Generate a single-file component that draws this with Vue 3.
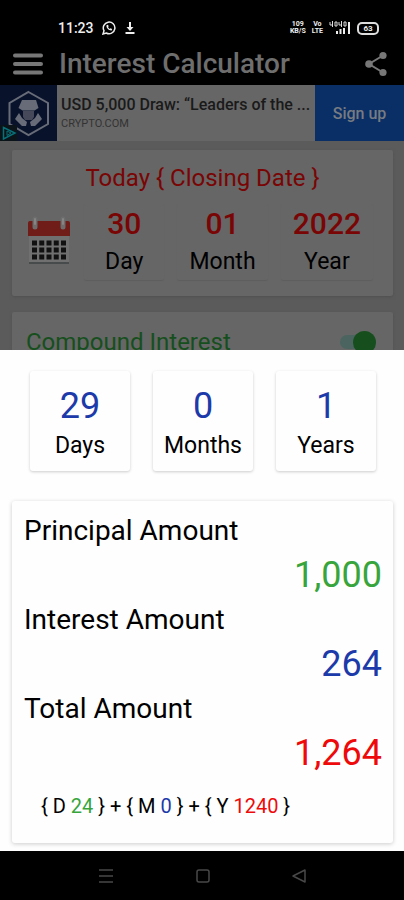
<template>
  <div class="phone">
    <header class="top">
      <div class="status">
        <span class="clock">11:23</span>
        <svg class="whatsapp" viewBox="0 0 14 14" width="14" height="14">
          <path d="M1 13l1-3.3A5.8 5.8 0 1 1 4.3 12z" fill="none" stroke="#eee" stroke-width="1.5" />
          <path d="M4.5 4.2c-.5 2.7 2.4 5.6 5.2 5.2l.4-1.4-1.6-.8-.8.7C6.9 7.5 6.3 6.9 6 6.1l.7-.7L6 3.8z" fill="#eee" />
        </svg>
        <svg viewBox="0 0 12 14" width="12" height="14">
          <path d="M6 1v6" stroke="#eee" stroke-width="2" />
          <path d="M2.5 6h7L6 10z" fill="#eee" />
          <path d="M1.5 12h9" stroke="#eee" stroke-width="2" />
        </svg>
        <div class="signals">
          <span class="tiny">109<br />KB/S</span>
          <span class="tiny">Vo<br />LTE</span>
          <svg viewBox="0 0 22 14" width="22" height="14">
            <path d="M1 1v3h3M3.5 0v6M6 1h2v4H6zM10 1v3h3M12.5 0v6M15 1h2v4h-2z" stroke="#ddd" fill="none" />
            <path d="M8 13v-3M11.5 13V8M15 13V7M20 13V1" stroke="#eee" stroke-width="2" />
          </svg>
          <span class="battery">63</span>
        </div>
      </div>
      <div class="appbar">
        <button class="icon-btn" aria-label="Menu">
          <svg viewBox="0 0 30 24" width="30" height="24">
            <path d="M2 3.5h26M2 12h26M2 20.5h26" stroke="#777" stroke-width="4" stroke-linecap="round" />
          </svg>
        </button>
        <h1>Interest Calculator</h1>
        <button class="icon-btn" aria-label="Share">
          <svg viewBox="0 0 24 26" width="24" height="26">
            <path d="M19 4.5L5 13l14 8.500" fill="none" stroke="#777" stroke-width="2" />
            <circle cx="19" cy="4.5" r="3.6" fill="#777" />
            <circle cx="5" cy="13" r="3.8" fill="#777" />
            <circle cx="19" cy="21.5" r="3.6" fill="#777" />
          </svg>
        </button>
      </div>
    </header>

    <main class="page">
      <section class="ad">
        <div class="ad-logo">
          <svg viewBox="0 0 57 56" width="57" height="56">
            <path d="M28.5 7L48 18v21L28.5 50 9.5 39V18z" fill="none" stroke="#686c78" stroke-width="2" />
            <path d="M22 15h14l2.5 8-4 2.5h-12l-4-2.5z" fill="#686c78" />
            <path d="M23 26h11v6l-2 3h-7l-2-3z" fill="#45495a" />
            <path d="M19 28l-4 6 7 7h4l1-4-5-4zM38 28l4 6-7 7h-4l-1-4 5-4z" fill="#686c78" />
            <path d="M0 40h17v16H0z" fill="#0a1419" />
            <path d="M3.5 42.500L15 48 3.500 54z" fill="none" stroke="#087079" stroke-width="1.5" />
            <path d="M7 46l4 2-4 2.5z" fill="none" stroke="#087079" />
          </svg>
        </div>
        <div class="ad-text">
          <strong>USD 5,000 Draw: “Leaders of the ...</strong>
          <span>CRYPTO.COM</span>
        </div>
        <a class="ad-link" href="#">Sign up</a>
      </section>

      <section class="card today">
        <h2>Today { Closing Date }</h2>
        <div class="date-row">
          <svg class="calendar" viewBox="0 0 44 52" width="44" height="52">
            <path d="M2 14h40v32H2z" fill="#707070" />
            <path d="M2 46h40v2H2z" fill="#474b4b" />
            <path d="M1 20V7q0-2 2-2h38q2 0 2 2v13z" fill="#701c18" />
            <path d="M8 3v8M36 3v8" stroke="#6d6d6d" stroke-width="5" stroke-linecap="round" />
            <path d="M8 3v5M36 3v5" stroke="#858585" stroke-width="2" stroke-linecap="round" />
            <path d="M5 27h34M5 34h34M5 41h34" stroke="#111" stroke-width="5" stroke-dasharray="5 2.25" />
          </svg>
          <div v-for="part in today" :key="part.label" class="date-box">
            <b>{{ part.value }}</b>
            <span>{{ part.label }}</span>
          </div>
        </div>
      </section>

      <section class="card compound">
        <label for="compound">Compound Interest</label>
        <input id="compound" v-model="compound" type="checkbox" class="switch" />
      </section>
    </main>

    <section class="sheet">
      <div class="duration">
        <div v-for="part in duration" :key="part.label" class="duration-box">
          <b>{{ part.value }}</b>
          <span>{{ part.label }}</span>
        </div>
      </div>
      <div class="result">
        <dl>
          <template v-for="row in amounts" :key="row.label">
            <dt>{{ row.label }}</dt>
            <dd :class="row.color">{{ row.value }}</dd>
          </template>
        </dl>
        <p class="formula">
          { D <span class="green">24</span> } + { M <span class="blue">0</span> } + { Y <span class="red">1240</span> }
        </p>
      </div>
    </section>

    <nav class="navbar">
      <button class="icon-btn" aria-label="Recent apps">
        <svg viewBox="0 0 16 16" width="16" height="16">
          <path d="M1 2h14M1 8h14M1 14h14" stroke="#484848" stroke-width="1.5" />
        </svg>
      </button>
      <button class="icon-btn" aria-label="Home">
        <svg viewBox="0 0 16 16" width="16" height="16">
          <rect x="2" y="2" width="12" height="12" rx="2" fill="none" stroke="#484848" stroke-width="1.5" />
        </svg>
      </button>
      <button class="icon-btn" aria-label="Back">
        <svg viewBox="0 0 16 16" width="16" height="16">
          <path d="M14 2v12L2 8z" fill="none" stroke="#484848" stroke-width="1.5" stroke-linejoin="round" />
        </svg>
      </button>
    </nav>
  </div>
</template>

<script setup>
import { ref } from "vue";

const compound = ref(true);

const today = [
  { label: "Day", value: "30" },
  { label: "Month", value: "01" },
  { label: "Year", value: "2022" },
];

const duration = [
  { label: "Days", value: 29 },
  { label: "Months", value: 0 },
  { label: "Years", value: 1 },
];

const amounts = [
  { label: "Principal Amount", value: "1,000", color: "green" },
  { label: "Interest Amount", value: "264", color: "blue" },
  { label: "Total Amount", value: "1,264", color: "red" },
];
</script>

<style>
body {
  margin: 0;
  background: #000;
}
</style>

<style scoped>
* {
  box-sizing: border-box;
}
.phone {
  display: flex;
  flex-direction: column;
  height: 100vh;
  font-family: Roboto, "Liberation Sans", sans-serif;
  color: #000;
}
svg {
  display: block;
  flex: none;
}
h1,
h2,
dl,
dd,
p {
  margin: 0;
}
.icon-btn {
  padding: 0;
  border: none;
  background: none;
  cursor: pointer;
}
.top {
  background: #000;
}
.status {
  display: flex;
  align-items: center;
  gap: 8px;
  height: 42px;
  padding: 14px 25px 0 58px;
  color: #eee;
}
.clock {
  font-size: 14px;
  font-weight: 500;
}
.signals {
  display: flex;
  align-items: center;
  gap: 6px;
  margin-left: auto;
}
.tiny {
  font-size: 7px;
  line-height: 7px;
  font-weight: 700;
  text-align: center;
}
.battery {
  width: 22px;
  border: 2px solid #ddd;
  border-radius: 5px;
  font-size: 8px;
  line-height: 9px;
  font-weight: 700;
  text-align: center;
}
.appbar {
  display: flex;
  align-items: center;
  height: 43px;
  padding: 0 16px 0 13px;
}
h1 {
  flex: 1;
  padding-left: 16px;
  font-size: 28px;
  font-weight: 500;
  color: #6e6e6e;
}
.page {
  flex: 1 1 0;
  min-height: 0;
  overflow: hidden;
  background: #5b5b5b;
}
.ad {
  display: flex;
  height: 56px;
  background: #666;
}
.ad-logo {
  background: #08132b;
}
.ad-text {
  flex: 1;
  display: flex;
  flex-direction: column;
  min-width: 0;
  padding: 10px 0 0 4px;
  white-space: nowrap;
  color: #1a1a1a;
}
.ad-text strong {
  font-size: 16px;
  line-height: 19px;
  font-weight: 500;
}
.ad-text span {
  font-size: 11px;
  line-height: 19px;
  color: #333;
}
.ad-link {
  display: flex;
  align-items: center;
  justify-content: center;
  width: 89px;
  background: #0a2f66;
  color: #777b82;
  font-size: 16px;
  font-weight: 500;
  text-decoration: none;
}
.card {
  margin: 9px 11px 0 12px;
  background: #666;
  border-radius: 2px;
  box-shadow: 0 1px 3px #505050;
}
.today {
  height: 146px;
  padding-top: 8px;
}
h2 {
  font-size: 24px;
  line-height: 40px;
  font-weight: 400;
  text-align: center;
  color: #790505;
}
.date-row {
  display: flex;
  align-items: center;
  justify-content: space-between;
  padding: 6px 20px 0 15px;
}
.date-box {
  display: flex;
  flex-direction: column;
  min-width: 80px;
  padding: 0 12px;
  text-align: center;
  border-radius: 2px;
  box-shadow: 0 1px 1px #5e5e5e;
}
.date-box b {
  font-size: 30px;
  line-height: 40px;
  font-weight: 500;
  color: #790505;
}
.date-box span {
  font-size: 23px;
  line-height: 36px;
}
.compound {
  display: flex;
  justify-content: space-between;
  margin-top: 16px;
  padding: 12px 17px 12px 14px;
}
.compound label {
  font-size: 24px;
  line-height: 36px;
  color: #164f1d;
}
.switch {
  appearance: none;
  position: relative;
  width: 36px;
  height: 14px;
  margin: 11px 0;
  border-radius: 7px;
  background: #4b6460;
}
.switch::after {
  content: "";
  position: absolute;
  top: -4px;
  right: 0;
  width: 23px;
  height: 23px;
  border-radius: 50%;
  background: #164f1d;
}
.sheet {
  padding: 21px 11px 8px 12px;
  background: #fefefe;
}
.duration {
  display: grid;
  grid-template-columns: repeat(3, 1fr);
  gap: 23px;
  padding: 0 17px 0 18px;
}
.duration-box {
  display: flex;
  flex-direction: column;
  height: 100px;
  padding-top: 13px;
  text-align: center;
  border-radius: 3px;
  box-shadow: 0 1px 3px #ccc;
}
.duration-box b {
  font-size: 36px;
  line-height: 44px;
  font-weight: 400;
  color: #1c3aa9;
}
.duration-box span {
  font-size: 23px;
  line-height: 36px;
}
.result {
  margin-top: 30px;
  padding: 8px 11px 7px 12px;
  border-radius: 3px;
  box-shadow: 0 1px 4px #ccc;
}
dt {
  font-size: 28px;
  line-height: 44px;
}
dd {
  font-size: 36px;
  line-height: 45px;
  text-align: right;
}
.formula {
  padding-left: 17px;
  font-size: 20px;
  line-height: 60px;
}
.green {
  color: #37a53c;
}
.blue {
  color: #1c3aa9;
}
.red {
  color: #ee0a0a;
}
.navbar {
  display: flex;
  align-items: center;
  justify-content: space-between;
  height: 49px;
  padding: 0 97px 0 98px;
  background: #000;
}
</style>
